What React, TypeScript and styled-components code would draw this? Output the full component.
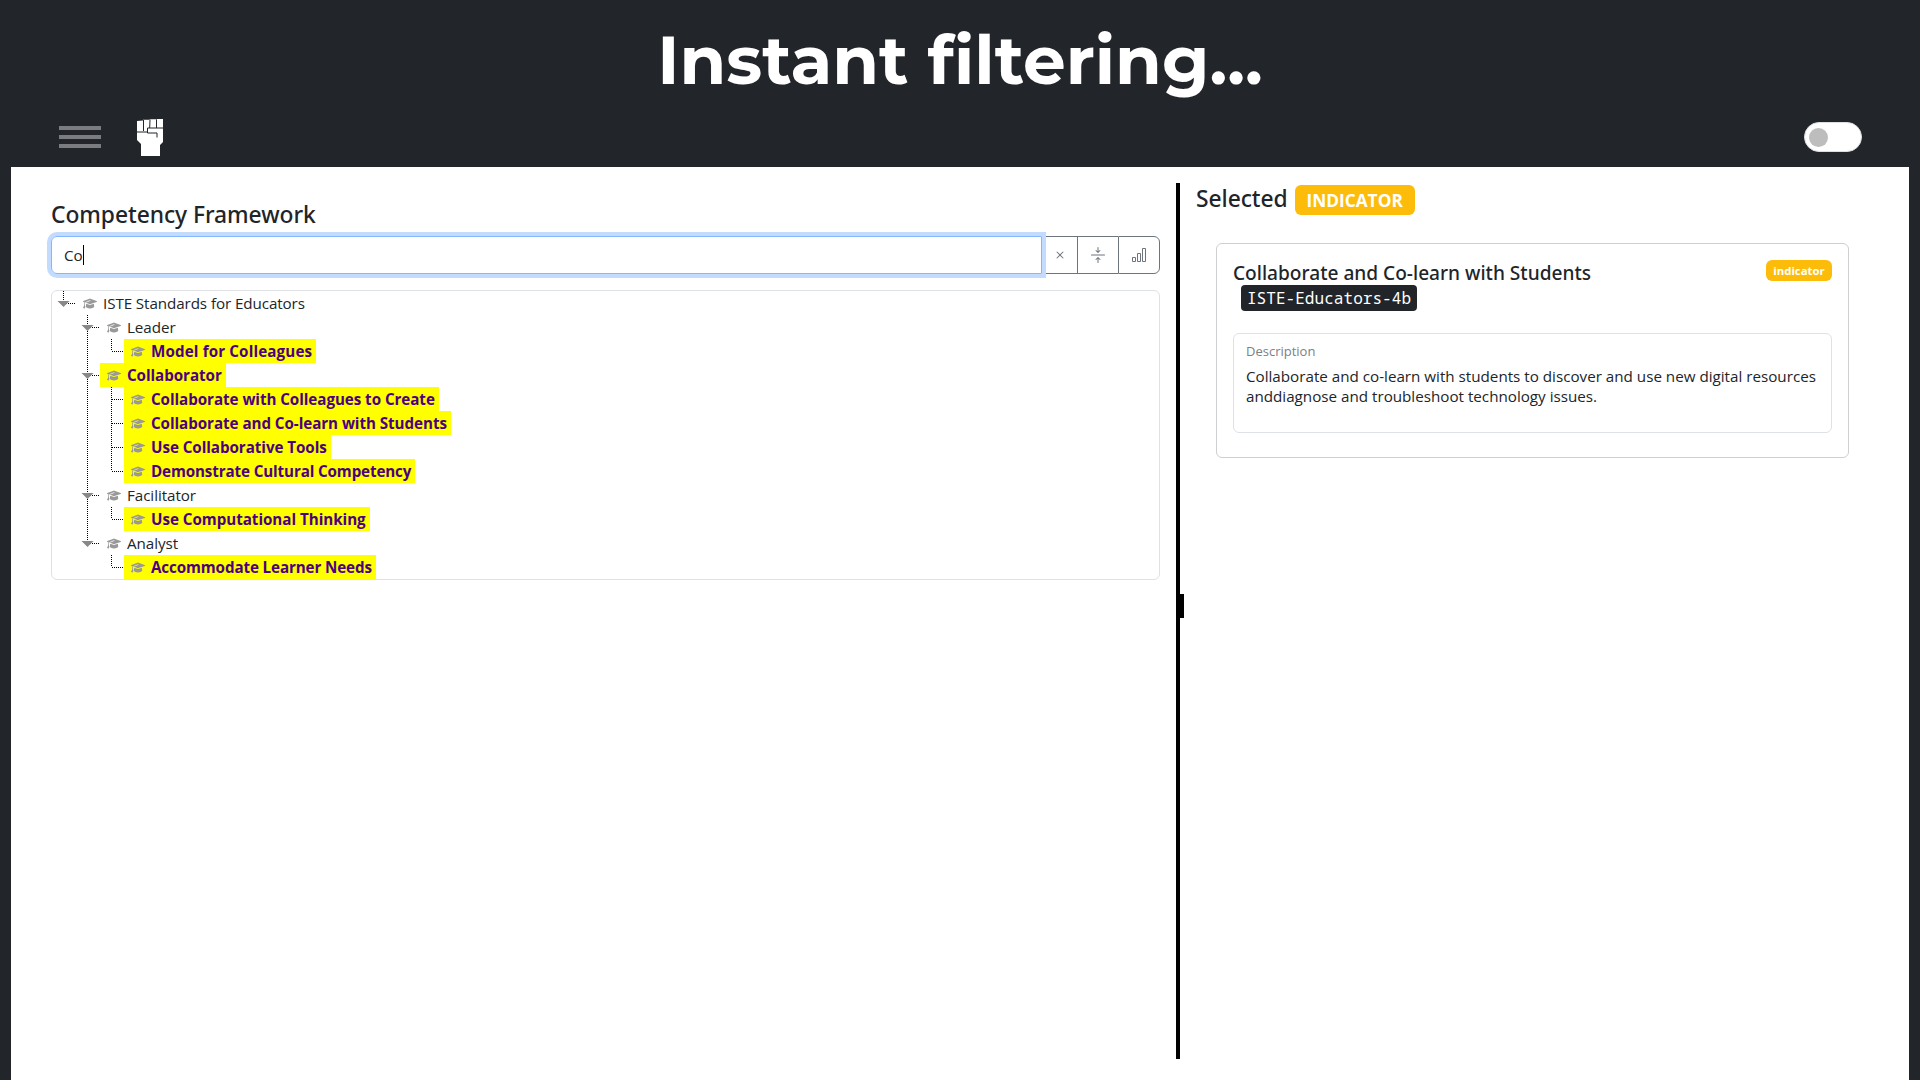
import React from 'react';
import styled, { createGlobalStyle } from 'styled-components';
import { FaGraduationCap } from 'react-icons/fa6';
import { BsArrowsCollapse, BsBarChart, BsX } from 'react-icons/bs';

const GlobalStyle = createGlobalStyle`
  * { box-sizing: border-box; }
  body {
    margin: 0;
    background: #22252a;
    color: #212529;
    font-family: "Open Sans", "Noto Sans", sans-serif;
    font-size: 15.2px;
    overflow: hidden;
  }
`;

const Page = styled.div`
  display: flex;
  flex-direction: column;
  height: 1080px;
  padding: 0 11px;
`;

const Banner = styled.h1`
  margin: 0;
  height: 108px;
  padding-top: 19px;
  color: #fff;
  font: 700 67.7px/82px Montserrat, Inter, sans-serif;
  text-align: center;
  white-space: nowrap;
`;

const TopBar = styled.header`
  display: flex;
  align-items: center;
  height: 59px;
  padding: 0 47px 1px 48px;
`;

const MenuButton = styled.div`
  display: flex;
  flex-direction: column;
  gap: 5px;
  width: 42px;
`;

const MenuLine = styled.span`
  height: 4px;
  background: #7a7c7f;
`;

const Logo = styled.svg`
  width: 26px;
  height: 37px;
  margin: 0 auto 0 36px;
`;

const Toggle = styled.div`
  display: flex;
  align-items: center;
  width: 58px;
  height: 30px;
  padding-left: 4px;
  border: 1px solid #dcdee0;
  border-radius: 15px;
  background: #fff;
`;

const Knob = styled.span`
  width: 19px;
  height: 19px;
  border-radius: 50%;
  background: #bdbdbd;
`;

const Main = styled.main`
  display: flex;
  flex: 1;
  padding-top: 16px;
  background: #fff;
`;

const FrameworkPane = styled.section`
  width: 1165px;
  padding: 16px 16px 0 40px;
`;

const Heading = styled.h2`
  margin: 0;
  font: 500 22.8px/32px "Noto Sans", "Open Sans", sans-serif;
  letter-spacing: -0.05px;
  white-space: nowrap;
`;

const SearchRow = styled.div`
  display: flex;
  height: 38px;
  margin: 5px 0 16px;
`;

const SearchField = styled.div`
  display: flex;
  flex: 1;
  align-items: center;
  padding-left: 12px;
  border: 1px solid #86b7fe;
  border-radius: 6px 0 0 6px;
  box-shadow: 0 0 0 4px #c2dbfe;
  z-index: 1;
`;

const Caret = styled.span`
  width: 1px;
  height: 20px;
  background: #000;
`;

const ToolButton = styled.div<{ $width: number; $first?: boolean; $last?: boolean }>`
  display: flex;
  align-items: center;
  justify-content: center;
  width: ${(p) => p.$width}px;
  border: 1px solid #6c757d;
  border-left-width: ${(p) => (p.$first ? 0 : 1)}px;
  border-right-width: ${(p) => (p.$last ? 1 : 0)}px;
  border-radius: ${(p) => (p.$last ? '0 6px 6px 0' : '0')};
  color: #6c757d;
`;

const Tree = styled.div`
  height: 290px;
  border: 1px solid #dee2e6;
  border-radius: 6px;
`;

const Row = styled.div`
  display: flex;
  height: 24px;
`;

const Guide = styled.svg`
  flex: none;
  width: 24px;
  height: 24px;
`;

const Label = styled.span<{ $hit?: boolean; $tracking?: number }>`
  display: flex;
  align-items: center;
  height: 24px;
  padding-right: 4px;
  background: ${(p) => (p.$hit ? '#ffff00' : 'transparent')};
  color: ${(p) => (p.$hit ? '#4b0082' : '#212529')};
  font-weight: ${(p) => (p.$hit ? 700 : 400)};
  letter-spacing: ${(p) => p.$tracking ?? -0.06}px;
  white-space: nowrap;
`;

const CapIcon = styled(FaGraduationCap)`
  width: 14px;
  height: 13px;
  margin: 0 6px 0 7px;
  color: #999;
`;

const Splitter = styled.div`
  display: flex;
  align-items: flex-start;
  width: 8px;
  height: 876px;
  border-left: 4px solid #000;
`;

const SplitHandle = styled.span`
  width: 4px;
  height: 24px;
  margin-top: 411px;
  background: #000;
`;

const DetailPane = styled.section`
  flex: 1;
  padding: 0 60px 0 12px;
`;

const SelectedRow = styled.div`
  display: flex;
  align-items: center;
  gap: 7px;
  height: 32px;
`;

const Badge = styled.span<{ $small?: boolean }>`
  display: flex;
  align-items: center;
  justify-content: center;
  width: ${(p) => (p.$small ? 66 : 120)}px;
  height: ${(p) => (p.$small ? 21 : 30)}px;
  margin-top: ${(p) => (p.$small ? 0 : 2)}px;
  padding-top: ${(p) => (p.$small ? 0 : 1)}px;
  border-radius: 6px;
  background: #fdbc0a;
  color: #fff;
  font-size: ${(p) => (p.$small ? 11.4 : 17.3)}px;
  font-weight: 700;
  line-height: 1;
`;

const Card = styled.article`
  width: 633px;
  height: 215px;
  margin: 28px 0 0 20px;
  padding: 16px;
  border: 1px solid #cdcfd1;
  border-radius: 6px;
`;

const CardHeader = styled.div`
  display: flex;
  justify-content: space-between;
  align-items: flex-start;
`;

const CardTitle = styled.h3`
  margin: 0;
  padding-top: 1px;
  font: 500 19.1px/24px "Noto Sans", "Open Sans", sans-serif;
  white-space: nowrap;
`;

const Code = styled.code`
  display: block;
  width: 176px;
  height: 26px;
  margin: 0 0 22px 8px;
  border-radius: 4px;
  background: #212529;
  color: #fff;
  font: 400 16.1px/26px "Noto Sans Mono", "DejaVu Sans Mono", monospace;
  text-align: center;
`;

const Description = styled.div`
  height: 100px;
  padding: 7px 12px;
  border: 1px solid #dee2e6;
  border-radius: 6px;
`;

const DescriptionLabel = styled.div`
  color: #7c8083;
  font-size: 13px;
  line-height: 20px;
`;

const DescriptionText = styled.p`
  margin: 5px 0 0;
  line-height: 20px;
  white-space: nowrap;
`;

type GuideKind = 'blank' | 'line' | 'root' | 'open' | 'openLast' | 'leaf' | 'leafLast';

const TreeGuide = ({ kind }: { kind: GuideKind }) => {
  const toCenter = kind === 'root' || kind === 'openLast' || kind === 'leafLast';
  const open = kind === 'root' || kind === 'open' || kind === 'openLast';
  return (
    <Guide viewBox="0 0 24 24">
      {kind !== 'blank' && (
        <path d={`M11.5 0V${toCenter ? 12 : 24}`} stroke="#000" strokeDasharray="1 1" />
      )}
      {kind !== 'blank' && kind !== 'line' && (
        <path d="M12 12.5H24" stroke="#000" strokeDasharray="1 1" />
      )}
      {open && <path d="M5.5 10H17.5L11.5 16Z" fill="#888" />}
    </Guide>
  );
};

const rows: { text: string; guides: GuideKind[]; hit?: boolean; tracking?: number }[] = [
  { text: 'ISTE Standards for Educators', guides: ['root'], tracking: -0.09 },
  { text: 'Leader', guides: ['blank', 'open'] },
  { text: 'Model for Colleagues', guides: ['blank', 'line', 'leafLast'], hit: true, tracking: 0.13 },
  { text: 'Collaborator', guides: ['blank', 'open'], hit: true },
  { text: 'Collaborate with Colleagues to Create', guides: ['blank', 'line', 'leaf'], hit: true },
  { text: 'Collaborate and Co-learn with Students', guides: ['blank', 'line', 'leaf'], hit: true },
  { text: 'Use Collaborative Tools', guides: ['blank', 'line', 'leaf'], hit: true },
  {
    text: 'Demonstrate Cultural Competency',
    guides: ['blank', 'line', 'leafLast'],
    hit: true,
    tracking: -0.13,
  },
  { text: 'Facilitator', guides: ['blank', 'open'] },
  { text: 'Use Computational Thinking', guides: ['blank', 'line', 'leafLast'], hit: true, tracking: -0.04 },
  { text: 'Analyst', guides: ['blank', 'openLast'] },
  {
    text: 'Accommodate Learner Needs',
    guides: ['blank', 'blank', 'leafLast'],
    hit: true,
    tracking: -0.12,
  },
];

const App = () => (
  <>
    <GlobalStyle />
    <Page>
      <Banner>Instant filtering...</Banner>
      <TopBar>
        <MenuButton>
          <MenuLine />
          <MenuLine />
          <MenuLine />
        </MenuButton>
        <Logo viewBox="0 0 26 37">
          <path d="M0 2L6 1.5V.8H12.5V.3H19V0H26V23L23 26V37H4V25L0 21Z" fill="#fff" />
          <path
            d="M6.5 1V12M13 .5L12.7 9M19.5 .3V9M0 13H10.5M10.5 9H26M10.5 9V14H20V18.5"
            fill="none"
            stroke="#22252a"
            strokeWidth="1"
          />
        </Logo>
        <Toggle>
          <Knob />
        </Toggle>
      </TopBar>
      <Main>
        <FrameworkPane>
          <Heading>Competency Framework</Heading>
          <SearchRow>
            <SearchField>
              Co
              <Caret />
            </SearchField>
            <ToolButton $width={35} $first>
              <BsX size={16} />
            </ToolButton>
            <ToolButton $width={41}>
              <BsArrowsCollapse size={16} />
            </ToolButton>
            <ToolButton $width={42} $last>
              <BsBarChart size={16} />
            </ToolButton>
          </SearchRow>
          <Tree>
            {rows.map((row) => (
              <Row key={row.text}>
                {row.guides.map((kind, i) => (
                  <TreeGuide key={i} kind={kind} />
                ))}
                <Label $hit={row.hit} $tracking={row.tracking}>
                  <CapIcon />
                  {row.text}
                </Label>
              </Row>
            ))}
          </Tree>
        </FrameworkPane>
        <Splitter>
          <SplitHandle />
        </Splitter>
        <DetailPane>
          <SelectedRow>
            <Heading>Selected</Heading>
            <Badge>INDICATOR</Badge>
          </SelectedRow>
          <Card>
            <CardHeader>
              <CardTitle>Collaborate and Co-learn with Students</CardTitle>
              <Badge $small>indicator</Badge>
            </CardHeader>
            <Code>ISTE-Educators-4b</Code>
            <Description>
              <DescriptionLabel>Description</DescriptionLabel>
              <DescriptionText>
                Collaborate and co-learn with students to discover and use new digital resources
                <br />
                anddiagnose and troubleshoot technology issues.
              </DescriptionText>
            </Description>
          </Card>
        </DetailPane>
      </Main>
    </Page>
  </>
);

export default App;
